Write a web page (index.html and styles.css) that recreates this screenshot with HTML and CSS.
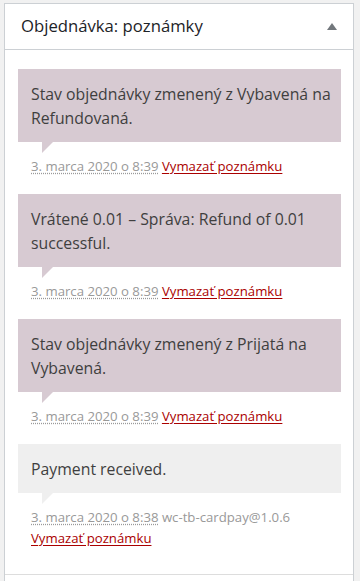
FILE: index.html
```html
<!DOCTYPE html>
<html lang="sk">
<head>
<meta charset="utf-8">
<title>Objednávka: poznámky</title>
<link rel="stylesheet" href="styles.css">
</head>
<body>
<div class="postbox">
  <div class="postbox-header">
    <h2 class="hndle">Objednávka: poznámky</h2>
    <span class="toggle-indicator" aria-hidden="true"></span>
  </div>
  <div class="inside">
    <ul class="order-notes">
      <li class="note system-note">
        <div class="note-content"><p>Stav objednávky zmenený z Vybavená na Refundovaná.</p></div>
        <p class="meta"><abbr class="exact-date" title="2020-03-03 08:39:00">3. marca 2020 o 8:39</abbr> <a href="#" class="delete-note">Vymazať poznámku</a></p>
      </li>
      <li class="note system-note">
        <div class="note-content"><p>Vrátené 0.01 – Správa: Refund of 0.01 successful.</p></div>
        <p class="meta"><abbr class="exact-date" title="2020-03-03 08:39:00">3. marca 2020 o 8:39</abbr> <a href="#" class="delete-note">Vymazať poznámku</a></p>
      </li>
      <li class="note system-note">
        <div class="note-content"><p>Stav objednávky zmenený z Prijatá na Vybavená.</p></div>
        <p class="meta"><abbr class="exact-date" title="2020-03-03 08:39:00">3. marca 2020 o 8:39</abbr> <a href="#" class="delete-note">Vymazať poznámku</a></p>
      </li>
      <li class="note">
        <div class="note-content"><p>Payment received.</p></div>
        <p class="meta"><abbr class="exact-date" title="2020-03-03 08:38:00">3. marca 2020 o 8:38</abbr> wc-tb-cardpay@1.0.6 <a href="#" class="delete-note">Vymazať poznámku</a></p>
      </li>
    </ul>
    <div class="add-note"></div>
  </div>
</div>
</body>
</html>
```
FILE: styles.css
```css
html, body {
  margin: 0;
  padding: 0;
}

body {
  background: #f1f1f1;
  font-family: "Open Sans", "Noto Sans", sans-serif;
  color: #444;
}

.postbox {
  margin: 3px 6px 0 4px;
  background: #fff;
  border: 1px solid #ccd0d4;
}

.postbox-header {
  height: 45px;
  display: flex;
  align-items: center;
  justify-content: space-between;
  padding: 0 16px 0 16px;
  border-bottom: 1px solid #ccd0d4;
}

.hndle {
  margin: 0;
  font-size: 16.7px;
  font-weight: 400;
  color: #1d2327;
  line-height: 1.36;
}

.toggle-indicator {
  width: 0;
  height: 0;
  border-left: 5px solid transparent;
  border-right: 5px solid transparent;
  border-bottom: 7px solid #72777c;
}

.inside {
  padding: 0;
}

.order-notes {
  list-style: none;
  margin: 0;
  padding: 19px 0 0;
}

.note {
  padding: 0 12px 0 13px;
  margin: 0 0 6px;
}

.note-content {
  position: relative;
  background: #efefef;
  padding: 12.5px 0 12px 13px;
}

.system-note .note-content {
  background: #d7cad2;
}

.note-content::after {
  content: "";
  position: absolute;
  left: 24px;
  bottom: -11px;
  width: 0;
  height: 0;
  border-style: solid;
  border-width: 11px 11px 0 0;
  border-color: #efefef transparent;
}

.system-note .note-content::after {
  border-color: #d7cad2 transparent;
}

.note-content p {
  margin: 0;
  font-size: 15.8px;
  line-height: 24px;
  color: #3f3f3f;
}

.meta {
  margin: 0;
  padding: 14px 13px 11.5px;
  font-size: 13.2px;
  line-height: 21px;
  color: #999;
}

.exact-date {
  text-decoration: underline dotted #999;
  text-underline-offset: 2px;
}

.delete-note {
  color: #a00;
  text-decoration: underline;
  text-underline-offset: 2px;
}

.add-note {
  margin-top: 14px;
  border-top: 1px solid #ddd;
  height: 60px;
}
```
